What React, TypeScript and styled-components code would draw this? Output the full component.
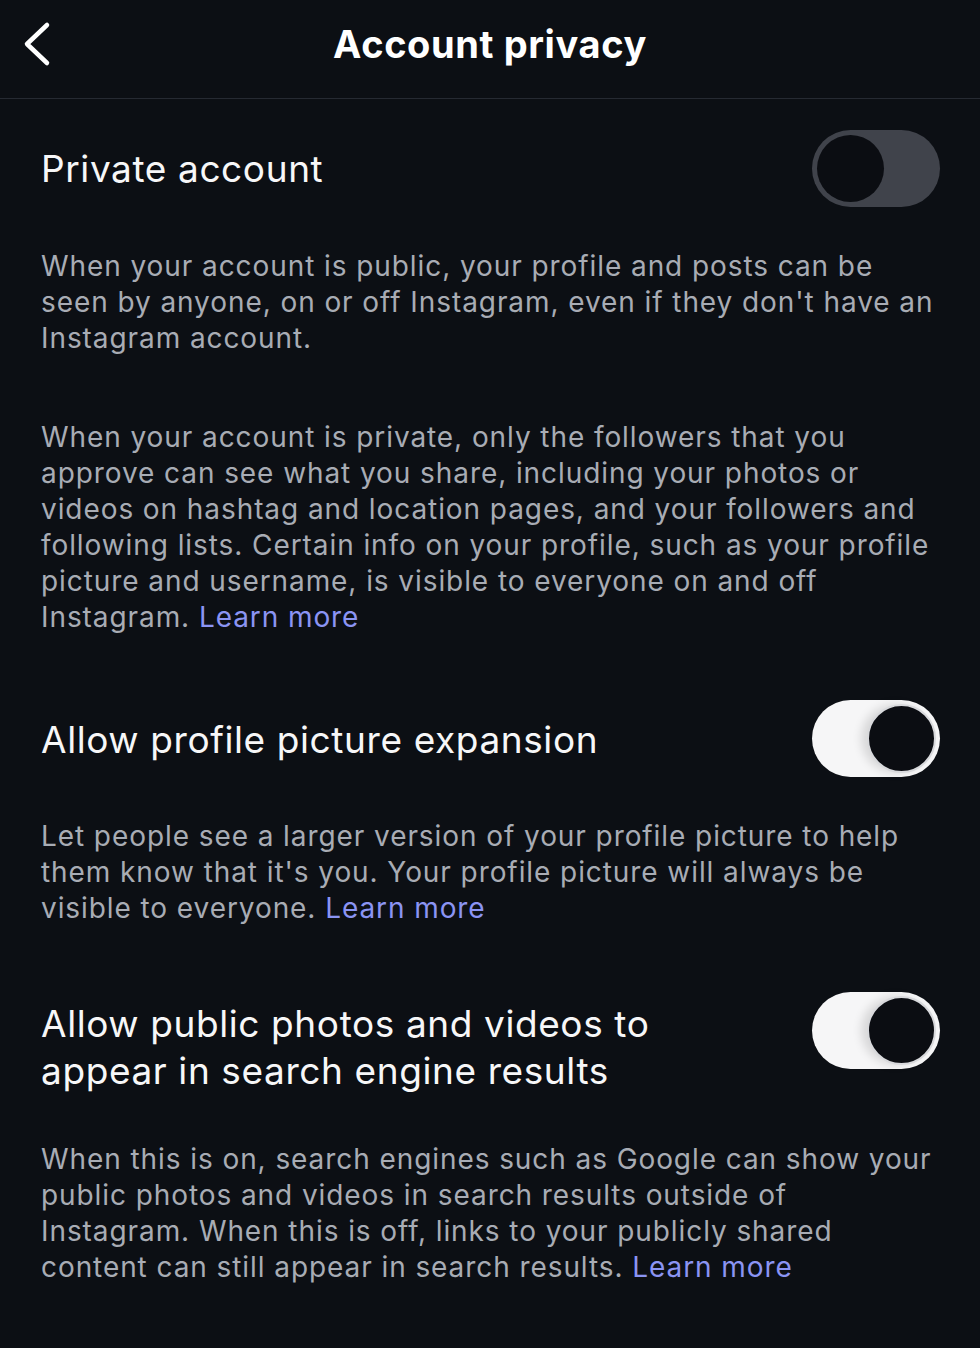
import React, { useState } from "react";
import styled, { createGlobalStyle } from "styled-components";

const Global = createGlobalStyle`
  html, body {
    margin: 0;
    padding: 0;
    background: #0c0f14;
  }
  body {
    font-family: Inter, "Noto Sans", "Liberation Sans", sans-serif;
    -webkit-font-smoothing: antialiased;
  }
`;

const Screen = styled.div`
  width: 980px;
  min-height: 1348px;
  background: #0c0f14;
  color: #f5f6f7;
`;

const TopBar = styled.header`
  height: 98px;
  display: grid;
  grid-template-columns: 80px 1fr 80px;
  align-items: center;
  border-bottom: 1px solid #262a32;
  box-sizing: content-box;
`;

const BackButton = styled.button`
  background: none;
  border: none;
  padding: 0 0 10px 20px;
  display: flex;
  align-items: center;
  cursor: pointer;
  color: #ffffff;
`;

const Title = styled.h1`
  margin: 0 0 10px;
  text-align: center;
  font-size: 38px;
  font-weight: 700;
  letter-spacing: 0.6px;
  color: #ffffff;
`;

const Content = styled.main`
  padding: 31px 40px 0 41px;
`;

const SettingRow = styled.div<{ $top: number }>`
  display: flex;
  align-items: flex-start;
  justify-content: space-between;
  gap: 24px;
  margin-top: ${(p) => p.$top}px;
`;

const SettingLabel = styled.div<{ $offset: number }>`
  padding-top: ${(p) => p.$offset}px;
  font-size: 37px;
  line-height: 47px;
  font-weight: 400;
  letter-spacing: 0.6px;
  color: #f7f7f8;
  white-space: nowrap;
`;

const Note = styled.p<{ $top: number }>`
  margin: ${(p) => p.$top}px 0 0;
  font-size: 28px;
  line-height: 36px;
  color: #a8acb4;
  letter-spacing: 0.92px;
  white-space: nowrap;
`;

const LearnMore = styled.a`
  color: #8b94f3;
  text-decoration: none;
`;

const Track = styled.button<{ $on: boolean }>`
  position: relative;
  flex: none;
  width: 128px;
  height: 77px;
  border-radius: 39px;
  border: none;
  padding: 0;
  cursor: pointer;
  background: ${(p) => (p.$on ? "#f6f6f7" : "#40434b")};
`;

const Knob = styled.span<{ $on: boolean }>`
  position: absolute;
  top: ${(p) => (p.$on ? 4 : 5)}px;
  left: ${(p) => (p.$on ? 55 : 5)}px;
  width: ${(p) => (p.$on ? 69 : 67)}px;
  height: ${(p) => (p.$on ? 69 : 67)}px;
  border-radius: 50%;
  box-sizing: border-box;
  background: #0b0d12;
  border: ${(p) => (p.$on ? "2px solid #d8d9dc" : "none")};
  box-shadow: ${(p) => (p.$on ? "-6px 0 10px rgba(0,0,0,0.12)" : "none")};
`;

function Toggle({ initial }: { initial: boolean }) {
  const [on, setOn] = useState(initial);
  return (
    <Track $on={on} onClick={() => setOn(!on)} aria-pressed={on}>
      <Knob $on={on} />
    </Track>
  );
}

function ChevronLeft() {
  return (
    <svg width="34" height="48" viewBox="0 0 34 48" fill="none">
      <path
        d="M27 5 L7 24 L27 43"
        stroke="currentColor"
        strokeWidth="4.5"
        strokeLinecap="round"
        strokeLinejoin="round"
      />
    </svg>
  );
}

export default function App() {
  return (
    <Screen>
      <Global />
      <TopBar>
        <BackButton aria-label="Back">
          <ChevronLeft />
        </BackButton>
        <Title>Account privacy</Title>
        <span />
      </TopBar>
      <Content>
        <SettingRow $top={0}>
          <SettingLabel $offset={15}>Private account</SettingLabel>
          <Toggle initial={false} />
        </SettingRow>
        <Note $top={41}>
          When your account is public, your profile and posts can be
          <br />
          seen by anyone, on or off Instagram, even if they don't have an
          <br />
          Instagram account.
        </Note>
        <Note $top={63}>
          When your account is private, only the followers that you
          <br />
          approve can see what you share, including your photos or
          <br />
          videos on hashtag and location pages, and your followers and
          <br />
          following lists. Certain info on your profile, such as your profile
          <br />
          picture and username, is visible to everyone on and off
          <br />
          Instagram. <LearnMore href="#">Learn more</LearnMore>
        </Note>
        <SettingRow $top={65}>
          <SettingLabel $offset={16}>Allow profile picture expansion</SettingLabel>
          <Toggle initial={true} />
        </SettingRow>
        <Note $top={41}>
          Let people see a larger version of your profile picture to help
          <br />
          them know that it's you. Your profile picture will always be
          <br />
          visible to everyone. <LearnMore href="#">Learn more</LearnMore>
        </Note>
        <SettingRow $top={66}>
          <SettingLabel $offset={8}>
            Allow public photos and videos to
            <br />
            appear in search engine results
          </SettingLabel>
          <Toggle initial={true} />
        </SettingRow>
        <Note $top={47}>
          When this is on, search engines such as Google can show your
          <br />
          public photos and videos in search results outside of
          <br />
          Instagram. When this is off, links to your publicly shared
          <br />
          content can still appear in search results.{" "}
          <LearnMore href="#">Learn more</LearnMore>
        </Note>
      </Content>
    </Screen>
  );
}
